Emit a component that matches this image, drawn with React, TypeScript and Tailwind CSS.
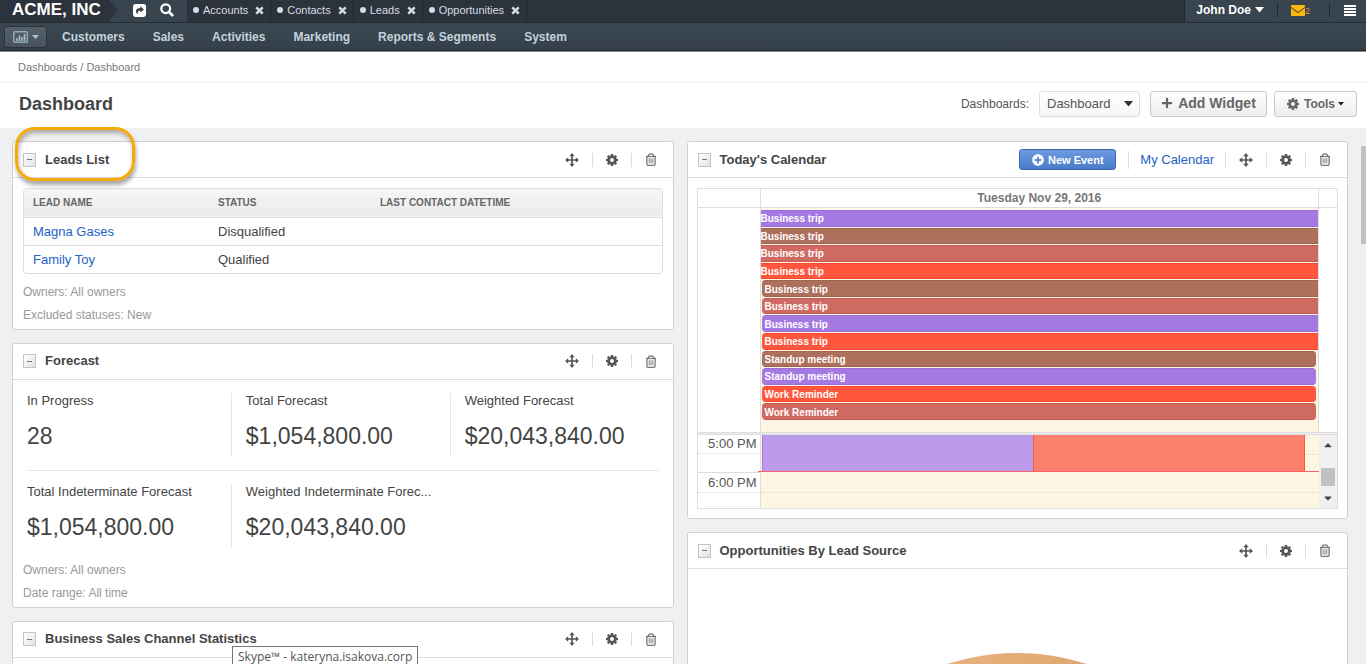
import type { ReactNode } from "react";
import { FaCaretDown, FaCaretUp, FaPlus, FaPlusCircle } from "react-icons/fa";

const tabs = ["Accounts", "Contacts", "Leads", "Opportunities"];

const menu = ["Customers", "Sales", "Activities", "Marketing", "Reports & Segments", "System"];

const leads = [
  { name: "Magna Gases", status: "Disqualified" },
  { name: "Family Toy", status: "Qualified" },
];

const PURPLE = "bg-[#a579e2] border-[#9c6cdb]";
const BROWN = "bg-[#ad705c] border-[#a26450]";
const ROSE = "bg-[#cf6a62] border-[#c65c54]";
const RED = "bg-[#ff573d] border-[#f54a30]";

const THROUGH = "";
const STARTS = "ml-px pl-[3px] rounded-l-sm";
const WITHIN = "ml-px pl-[3px] mr-0.5 rounded-sm";

const events = [
  { title: "Business trip", color: PURPLE, span: THROUGH },
  { title: "Business trip", color: BROWN, span: THROUGH },
  { title: "Business trip", color: ROSE, span: THROUGH },
  { title: "Business trip", color: RED, span: THROUGH },
  { title: "Business trip", color: BROWN, span: STARTS },
  { title: "Business trip", color: ROSE, span: STARTS },
  { title: "Business trip", color: PURPLE, span: STARTS },
  { title: "Business trip", color: RED, span: STARTS },
  { title: "Standup meeting", color: BROWN, span: WITHIN },
  { title: "Standup meeting", color: PURPLE, span: WITHIN },
  { title: "Work Reminder", color: RED, span: WITHIN },
  { title: "Work Reminder", color: ROSE, span: WITHIN },
];

const TEETH = [0, 45, 90, 135];

function GearIcon() {
  return (
    <svg width="12" height="12" viewBox="0 0 12 12" aria-hidden="true">
      <circle cx="6" cy="6" r="3.2" fill="none" stroke="currentColor" strokeWidth="2.5" />
      {TEETH.map((angle) => (
        <path
          key={angle}
          d="M4.900 0h2.200l.3 2H4.600ZM4.900 12h2.200l.3-2H4.600Z"
          fill="currentColor"
          transform={`rotate(${angle} 6 6)`}
        />
      ))}
    </svg>
  );
}

function MoveIcon() {
  return (
    <svg width="14" height="14" viewBox="0 0 14 14" aria-hidden="true">
      <path d="M7 2v10M2 7h10" stroke="currentColor" strokeWidth="1.7" />
      <path d="M7 0 9.700 3.200H4.300ZM7 14 9.700 10.800H4.300ZM0 7 3.200 4.300V9.700ZM14 7 10.800 4.300V9.700Z" fill="currentColor" />
    </svg>
  );
}

function TrashIcon() {
  return (
    <svg width="12" height="13" viewBox="0 0 12 13" fill="none" stroke="#777" aria-hidden="true">
      <path d="M1 3.500h10" strokeWidth="1.300" />
      <path d="M3 3.200 4.200 1.200h3.600L9 3.200" strokeWidth="1.300" />
      <path d="M1.900 3.500v7.600q0 1.200 1.100 1.200h6q1.100 0 1.100-1.200V3.500" strokeWidth="1.300" />
      <path d="M4.200 5.200v5.300M6 5.200v5.300M7.800 5.200v5.300" strokeWidth="0.9" />
    </svg>
  );
}

function CloseIcon() {
  return (
    <svg width="9" height="9" viewBox="0 0 9 9" aria-hidden="true">
      <path d="M1.300 1.300l6.400 6.400M7.700 1.300 1.300 7.700" stroke="currentColor" strokeWidth="2.500" />
    </svg>
  );
}

function SearchIcon() {
  return (
    <svg width="14" height="14" viewBox="0 0 14 14" fill="none" stroke="currentColor" aria-hidden="true">
      <circle cx="5.700" cy="5.700" r="4.400" strokeWidth="2.200" />
      <path d="M8.900 8.900 12.300 12.300" strokeWidth="2.700" strokeLinecap="round" />
    </svg>
  );
}

function LinesIcon() {
  return (
    <svg width="12" height="11" viewBox="0 0 12 11" aria-hidden="true">
      <path d="M0 1h12M0 4h12M0 7h12M0 10h12" stroke="currentColor" strokeWidth="1.800" />
    </svg>
  );
}

function ShareIcon() {
  return (
    <svg width="13" height="13" viewBox="0 0 13 13" aria-hidden="true">
      <rect width="13" height="13" rx="2.4" fill="#fff" />
      <path
        d="M7.3 2.2 11 5.4 7.3 8.6V6.8C5 6.7 4.3 7.8 4.9 10.6 1.700 8.400 2.300 4.200 7.300 4.100Z"
        fill="#36424c"
      />
    </svg>
  );
}

function ChartIcon() {
  return (
    <svg width="15" height="12" viewBox="0 0 15 12" fill="none" aria-hidden="true">
      <rect x="0.75" y="0.75" width="13.5" height="10.5" rx="1" stroke="#8fa9b6" strokeWidth="1.5" />
      <path d="M4 10V7M6.500 10V4.500M9 10V6M11.500 10V3" stroke="#a9bfca" strokeWidth="1.600" />
    </svg>
  );
}

function MailIcon() {
  return (
    <svg width="14" height="11" viewBox="0 0 14 11" aria-hidden="true">
      <rect width="14" height="11" rx="1" fill="#fdb813" />
      <path d="M0 2.400 5.800 6.700q1.200.8 2.400 0L14 2.400" fill="none" stroke="#6b5524" strokeWidth="1.100" />
    </svg>
  );
}

function Separator({ tall = false }: { tall?: boolean }) {
  return <span className={tall ? "h-[18px] w-px bg-[#ddd]" : "h-[14px] w-px bg-[#ddd]"} />;
}

function Widget({
  title,
  actions,
  overlay,
  children,
}: {
  title: string;
  actions?: ReactNode;
  overlay?: ReactNode;
  children?: ReactNode;
}) {
  return (
    <section className="relative rounded-[3px] border border-[#d0d0d0] bg-white">
      <header className="flex h-9 items-center border-b border-[#ddd] pr-4 pl-[10px]">
        <button
          type="button"
          aria-label={`Collapse ${title}`}
          className="flex h-[14px] w-[13px] items-center justify-center border border-[#c4c4c4] bg-linear-to-br from-white to-[#e2e2e2]"
        >
          <span className="h-px w-[5px] bg-[#777]" />
        </button>
        <h2 className="ml-[9px] text-[13px] leading-5 font-bold whitespace-nowrap text-[#444]">{title}</h2>
        <div className="ml-auto flex items-center gap-[13px] text-[#555]">
          {actions}
          <button type="button" aria-label="Move">
            <MoveIcon />
          </button>
          <Separator />
          <button type="button" aria-label="Configure">
            <GearIcon />
          </button>
          <Separator />
          <button type="button" aria-label="Delete">
            <TrashIcon />
          </button>
        </div>
      </header>
      {children}
      {overlay}
    </section>
  );
}

function Notes({ lines }: { lines: string[] }) {
  return (
    <div className="px-[10px] pb-[2px] text-[12px] leading-[23px] text-[#999]">
      {lines.map((line) => (
        <p key={line}>{line}</p>
      ))}
    </div>
  );
}

function Metric({ label, value, divided = false }: { label: string; value: string; divided?: boolean }) {
  return (
    <div className={divided ? "h-[63px] border-r border-[#e5e5e5] pl-[14px]" : "h-[63px] pl-[14px]"}>
      <p className="text-[13px] leading-4 whitespace-nowrap text-[#444]">{label}</p>
      <p className="mt-[11px] text-[23px] leading-8 text-[#444]">{value}</p>
    </div>
  );
}

function TopBar() {
  return (
    <div className="flex h-[23px] items-stretch border-b border-[#252c34] bg-[#2d333c]">
      <div className="flex bg-[#38444e] pr-[13px]">
        <a href="#home" className="flex w-[109px] items-center bg-[#2d333c] pb-[2px] pl-3 text-[17px] leading-5 font-bold whitespace-nowrap text-white">
          ACME, INC
        </a>
        <svg width="9" height="22" viewBox="0 0 9 22" aria-hidden="true">
          <path d="M0 0 9 10 0 21Z" fill="#2d333c" />
        </svg>
        <button type="button" aria-label="Share" className="ml-[15px] pb-[2px]">
          <ShareIcon />
        </button>
        <button type="button" aria-label="Search" className="ml-[14px] pb-[2px] text-white">
          <SearchIcon />
        </button>
      </div>
      <nav aria-label="Pinned pages" className="flex">
        {tabs.map((tab) => (
          <div key={tab} className="flex items-center border-r border-[#20262d] px-[6px] pb-[2px] text-[#d5dde3]">
            <span className="size-[6px] rounded-full bg-[#d5dde3]" />
            <a href="#tab" className="ml-[4px] text-[11px] leading-4">
              {tab}
            </a>
            <button type="button" aria-label={`Close ${tab}`} className="ml-[7px]">
              <CloseIcon />
            </button>
          </div>
        ))}
      </nav>
      <div className="ml-auto flex items-center border-l border-[#20262d] bg-[#38444e] pr-[10px] pb-[2px] pl-[11px]">
        <button type="button" className="flex items-center gap-1 text-[12px] leading-4 font-bold text-white">
          John Doe
          <svg width="9" height="6" viewBox="0 0 9 6" aria-hidden="true">
            <path d="M0 0h9L4.500 5.500Z" fill="#fff" />
          </svg>
        </button>
        <span className="ml-[13px] h-[14px] w-px bg-[#222a31]" />
        <button type="button" aria-label="2 new messages" className="ml-[13px] flex items-end text-[9px] leading-[9px] text-[#e98a3a]">
          <MailIcon />
          <span>2</span>
        </button>
        <span className="ml-[19px] h-[14px] w-px bg-[#222a31]" />
        <button type="button" aria-label="Menu" className="ml-[14px] text-white">
          <LinesIcon />
        </button>
      </div>
    </div>
  );
}

function MenuBar() {
  return (
    <nav className="flex h-[29px] items-center border-b border-[#858b92] bg-linear-to-b from-[#3b4852] to-[#343f49] pl-1 shadow-[inset_0_-1px_#1a2531]">
      <button
        type="button"
        aria-label="Dashboards menu"
        className="flex h-[22px] w-[43px] items-center justify-center gap-1 rounded-[3px] border border-[#2a333c] bg-linear-to-b from-[#566069] to-[#48535d] text-[#a9bfca]"
      >
        <ChartIcon />
        <svg width="7" height="4" viewBox="0 0 7 4" aria-hidden="true">
          <path d="M0 0h7L3.500 4Z" fill="#a9bfca" />
        </svg>
      </button>
      <div className="ml-[15px] flex gap-7 text-[12px] leading-4 font-bold text-[#c3d2dc]">
        {menu.map((item) => (
          <a key={item} href="#menu">
            {item}
          </a>
        ))}
      </div>
    </nav>
  );
}

function PageHeader() {
  return (
    <div className="flex h-[45px] items-center bg-white pr-[9px] pb-[3px] pl-[19px]">
      <h1 className="text-[18px] leading-6 font-bold text-[#444]">Dashboard</h1>
      <label htmlFor="dashboard" className="ml-auto text-[12px] leading-4 text-[#555]">
        Dashboards:
      </label>
      <div className="relative ml-[10px]">
        <select
          id="dashboard"
          className="block h-[26px] w-[101px] appearance-none rounded-[3px] border border-[#ddd] bg-linear-to-b from-white to-[#f6f6f6] pl-[7px] text-[13px] text-[#555]"
        >
          <option>Dashboard</option>
        </select>
        <svg width="9" height="6" viewBox="0 0 9 6" className="pointer-events-none absolute top-[10px] right-[7px]" aria-hidden="true">
          <path d="M0 0h9L4.500 5.500Z" fill="#333" />
        </svg>
      </div>
      <button
        type="button"
        className="ml-[10px] flex h-[26px] w-[117px] items-center justify-center gap-[5px] rounded-[3px] border border-[#c8c8c8] bg-linear-to-b from-white to-[#ececec] pb-[2px] text-[14px] leading-5 font-bold text-[#666]"
      >
        <FaPlus size={12} />
        Add Widget
      </button>
      <button
        type="button"
        className="ml-[7px] flex h-[26px] w-[83px] items-center justify-center rounded-[3px] border border-[#c8c8c8] bg-linear-to-b from-white to-[#ececec] text-[12px] leading-5 font-bold text-[#666]"
      >
        <GearIcon />
        <span className="mr-[3px] ml-[5px]">Tools</span>
        <svg width="6" height="4" viewBox="0 0 6 4" aria-hidden="true">
          <path d="M0 0h6L3 3.500Z" fill="#222" />
        </svg>
      </button>
    </div>
  );
}

function LeadsList() {
  return (
    <Widget
      title="Leads List"
      overlay={
        <div className="pointer-events-none absolute -top-[15px] left-[2px] h-[54px] w-[120px] rounded-[20px] border-3 border-[#f7a90c] shadow-[1px_4px_4px_rgba(0,0,0,0.35),inset_1px_3px_4px_rgba(0,0,0,0.3)]" />
      }
    >
      <div className="px-[10px] pt-[10px] pb-[7px]">
        <div className="overflow-hidden rounded-[4px] border border-[#ddd]">
          <table className="w-full table-fixed text-left">
            <thead>
              <tr className="h-7 border-b border-[#ddd] bg-linear-to-b from-[#f6f6f6] to-[#ebebeb] text-[10px] leading-4 text-[#666]">
                <th className="w-[185px] pl-[9px] font-bold">LEAD NAME</th>
                <th className="w-[162px] pl-[9px] font-bold">STATUS</th>
                <th className="pl-[9px] font-bold">LAST CONTACT DATETIME</th>
              </tr>
            </thead>
            <tbody className="divide-y divide-[#ddd] text-[13px] leading-[27px] text-[#444]">
              {leads.map((lead) => (
                <tr key={lead.name}>
                  <td className="pl-[9px]">
                    <a href="#lead" className="text-[#1d62c4]">
                      {lead.name}
                    </a>
                  </td>
                  <td className="pl-[9px]">{lead.status}</td>
                  <td />
                </tr>
              ))}
            </tbody>
          </table>
        </div>
      </div>
      <Notes lines={["Owners: All owners", "Excluded statuses: New"]} />
    </Widget>
  );
}

function Forecast() {
  return (
    <Widget title="Forecast">
      <div className="pt-[13px] pb-[12px]">
        <div className="grid grid-cols-3 pr-[3px]">
          <Metric label="In Progress" value="28" divided />
          <Metric label="Total Forecast" value="$1,054,800.00" divided />
          <Metric label="Weighted Forecast" value="$20,043,840.00" />
        </div>
        <div className="mx-[14px] mt-[14px] mb-[13px] h-px bg-[#e5e5e5]" />
        <div className="grid grid-cols-3 pr-[3px]">
          <Metric label="Total Indeterminate Forecast" value="$1,054,800.00" divided />
          <Metric label="Weighted Indeterminate Forec..." value="$20,043,840.00" />
        </div>
      </div>
      <Notes lines={["Owners: All owners", "Date range: All time"]} />
    </Widget>
  );
}

function Calendar() {
  return (
    <Widget
      title="Today's Calendar"
      actions={
        <>
          <button
            type="button"
            className="-mx-px flex h-[21px] w-[97px] items-center justify-center gap-1 rounded-[3px] border border-[#3f68ab] bg-linear-to-b from-[#6d9ae0] to-[#4a7cca] text-[11px] leading-4 font-bold text-white"
          >
            <FaPlusCircle size={12} />
            New Event
          </button>
          <Separator tall />
          <a href="#calendar" className="-mx-[2px] text-[13px] leading-5 text-[#1d62c4]">
            My Calendar
          </a>
          <Separator tall />
        </>
      }
    >
      <div className="px-[9px] pt-[10px] pb-[9px]">
        <div className="border border-[#ddd]">
          <div className="grid grid-cols-[63px_1fr_18px] divide-x divide-[#ddd] border-b border-[#ddd]">
            <span />
            <h3 className="text-center text-[12px] leading-[18px] font-bold text-[#777]">Tuesday Nov 29, 2016</h3>
            <span />
          </div>
          <div className="grid grid-cols-[63px_1fr_18px] divide-x divide-[#ddd]">
            <span />
            <div className="bg-[#fdf6e3] pt-[2px] pb-3">
              <ul className="flex h-[210px] flex-col gap-px">
                {events.map((event, index) => (
                  <li
                    key={index}
                    className={`flex min-h-0 flex-1 items-center border-y pt-px text-[10px] leading-[13px] font-bold text-white ${event.color} ${event.span}`}
                  >
                    {event.title}
                  </li>
                ))}
              </ul>
            </div>
            <span />
          </div>
          <div className="h-[3px] border-y border-[#ddd] bg-[#eee]" />
          <div className="grid grid-cols-[63px_1fr_18px]">
            <div className="border-r border-[#ddd] text-right text-[13px] text-[#555]">
              <div className="h-[37px]">
                <p className="h-[19px] border-b border-dotted border-[#ddd] pr-[3px] leading-[18px]">5:00 PM</p>
              </div>
              <div className="h-[36px] border-t border-[#ddd]">
                <p className="h-[20px] border-b border-dotted border-[#ddd] pr-[3px] leading-[19px]">6:00 PM</p>
              </div>
            </div>
            <div className="bg-[#fdf6e3]">
              <div className="flex h-9 pl-px">
                <div className="flex-1 border-l border-[#a579e2] bg-[#bb9be9]" />
                <div className="flex-1 border-x border-[#ff573d] bg-[#fb816c]" />
                <div className="w-[14px]">
                  <div className="h-[20px] border-b border-dotted border-[#ddd]" />
                </div>
              </div>
              <div className="-ml-[3px] h-px bg-[#f8606a]" />
              <div className="h-[21px] border-b border-dotted border-[#ddd]" />
            </div>
            <div className="flex flex-col items-center bg-[#f1f1f1] py-1 text-[#444]">
              <FaCaretUp size={12} />
              <span className="mt-[17px] h-[18px] w-[14px] bg-[#c1c1c1]" />
              <FaCaretDown size={12} className="mt-auto" />
            </div>
          </div>
        </div>
      </div>
    </Widget>
  );
}

function LeadSources() {
  return (
    <Widget title="Opportunities By Lead Source">
      <div className="flex justify-center pt-[84px]">
        <svg width="456" height="456" viewBox="0 0 456 456" role="img" aria-label="Opportunities by lead source">
          <defs>
            <linearGradient id="slice" x1="0" x2="1">
              <stop offset="0.35" stopColor="#e8b17d" />
              <stop offset="0.65" stopColor="#dfa670" />
            </linearGradient>
          </defs>
          <circle cx="228" cy="228" r="228" fill="url(#slice)" />
        </svg>
      </div>
    </Widget>
  );
}

function ChannelStatistics() {
  return (
    <Widget
      title="Business Sales Channel Statistics"
      overlay={
        <div
          role="tooltip"
          className="absolute top-[24px] left-[219px] border border-[#767676] bg-white px-[5px] pb-1 text-[12px] leading-[19px] whitespace-nowrap text-[#555] [font-family:'Open_Sans','Noto_Sans',sans-serif]"
        >
          Skype™ - kateryna.isakova.corp
        </div>
      }
    >
      <div className="h-80" />
    </Widget>
  );
}

export default function App() {
  return (
    <div className="flex h-screen flex-col overflow-hidden bg-[#f0f0f0] font-['Liberation_Sans',Arial,sans-serif]">
      <div className="shrink-0">
        <TopBar />
        <MenuBar />
        <nav aria-label="Breadcrumb" className="flex h-[31px] items-center border-b-2 border-[#f5f5f5] bg-white pl-[18px] text-[11px] leading-4 text-[#777]">
          <a href="#dashboards">Dashboards</a>
          <span className="mx-[3px]">/</span>
          <span>Dashboard</span>
        </nav>
        <PageHeader />
      </div>
      <main className="flex min-h-0 flex-1 items-start">
        <div className="grid flex-1 grid-cols-2 items-start gap-[13px] pt-[13px] pr-[13px] pl-3">
          <div className="grid gap-[13px]">
            <LeadsList />
            <Forecast />
            <ChannelStatistics />
          </div>
          <div className="grid gap-[13px]">
            <Calendar />
            <LeadSources />
          </div>
        </div>
        <div className="mt-[18px] h-[98px] w-[5px] bg-[#c1c1c1]" />
      </main>
    </div>
  );
}
